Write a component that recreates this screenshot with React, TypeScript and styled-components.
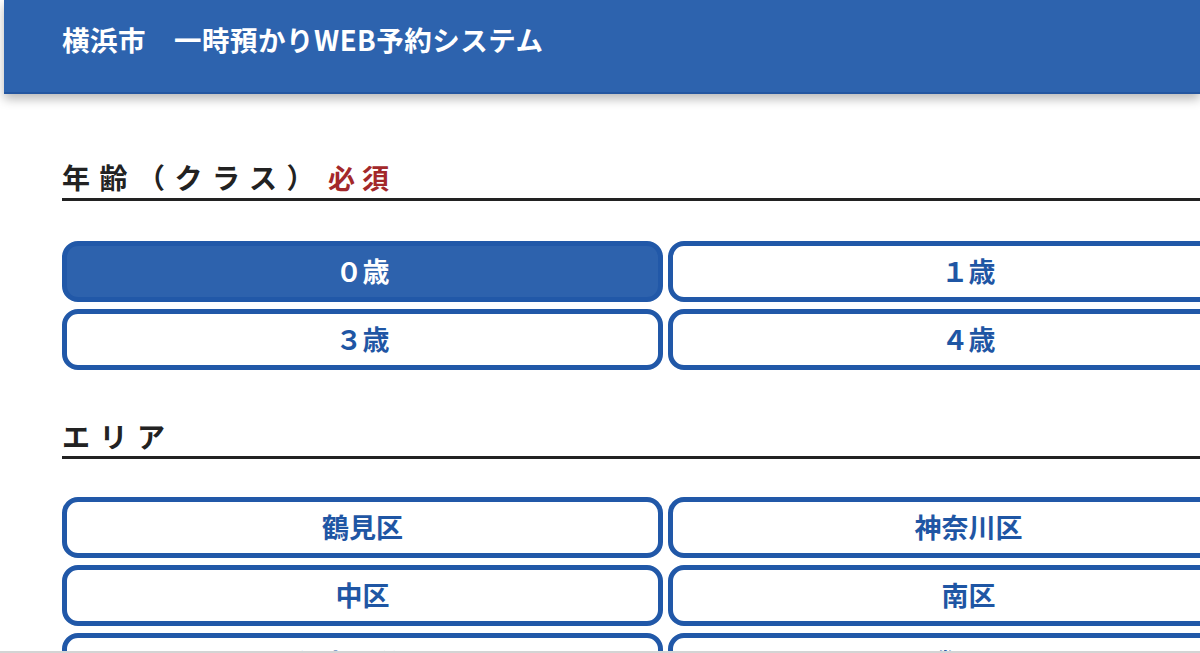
import React from "react";
import styled, { createGlobalStyle } from "styled-components";

const Global = createGlobalStyle`
  html, body { margin: 0; padding: 0; background: #fff; overflow: hidden; }
  body { font-family: "Noto Sans CJK JP", "Noto Sans", sans-serif; }
  * { box-sizing: border-box; }
`;

const Page = styled.div`
  width: 1200px;
  height: 653px;
  overflow: hidden;
  position: relative;
  border-bottom: 2px solid #d4d4d4;
`;

const Header = styled.header`
  margin-left: 4px;
  height: 94px;
  background: #2d63ae;
  border-bottom: 2px solid #2456a0;
  box-shadow: 0 5px 10px rgba(0, 0, 0, 0.28);
  display: flex;
  align-items: center;
  padding: 0 0 14px 58px;
  position: relative;
  z-index: 1;
`;

const Title = styled.h1`
  margin: 0;
  color: #fff;
  font-size: 27.5px;
  font-weight: 700;
  letter-spacing: 0.5px;
  white-space: pre;
`;

const Main = styled.main`
  padding-left: 62px;
  width: 1269px;
`;

const Section = styled.section<{ $top: number }>`
  margin-top: ${(p) => p.$top}px;
`;

const Heading = styled.h2`
  margin: 0;
  font-size: 28px;
  line-height: 40px;
  font-weight: 700;
  color: #222;
  letter-spacing: 9.5px;
  padding-bottom: 0;
  border-bottom: 3px solid #222;
  white-space: nowrap;
`;

const Required = styled.span`
  color: #a3282a;
  font-size: 27px;
  letter-spacing: 7px;
  margin-left: 4px;
`;

const Grid = styled.div<{ $top: number }>`
  margin-top: ${(p) => p.$top}px;
  display: grid;
  grid-template-columns: 601px 601px;
  column-gap: 5px;
  row-gap: 7px;
`;

const Choice = styled.button<{ $active?: boolean }>`
  height: 61px;
  border: 5px solid #2158a8;
  border-radius: 16px;
  background: ${(p) => (p.$active ? "#2d62ad" : "#fff")};
  color: ${(p) => (p.$active ? "#fff" : "#1f56a4")};
  font-family: "Noto Sans CJK JP", "Noto Sans", sans-serif;
  font-size: 27px;
  font-weight: 700;
  letter-spacing: 0;
  display: flex;
  align-items: center;
  justify-content: center;
  padding: 0 0 2px 0;
  cursor: pointer;
`;

const ages = ["０歳", "１歳", "３歳", "４歳"];
const areas = ["鶴見区", "神奈川区", "中区", "南区", "保土ケ谷区", "磯子区"];

export default function App() {
  return (
    <>
      <Global />
      <Page>
        <Header>
          <Title>{"横浜市　一時預かりWEB予約システム"}</Title>
        </Header>
        <Main>
          <Section $top={63}>
            <Heading>
              年齢（クラス）<Required>必須</Required>
            </Heading>
            <Grid $top={40}>
              {ages.map((a, i) => (
                <Choice key={a} $active={i === 0}>
                  {a}
                </Choice>
              ))}
            </Grid>
          </Section>
          <Section $top={46}>
            <Heading>エリア</Heading>
            <Grid $top={38}>
              {areas.map((a) => (
                <Choice key={a}>{a}</Choice>
              ))}
            </Grid>
          </Section>
        </Main>
      </Page>
    </>
  );
}
